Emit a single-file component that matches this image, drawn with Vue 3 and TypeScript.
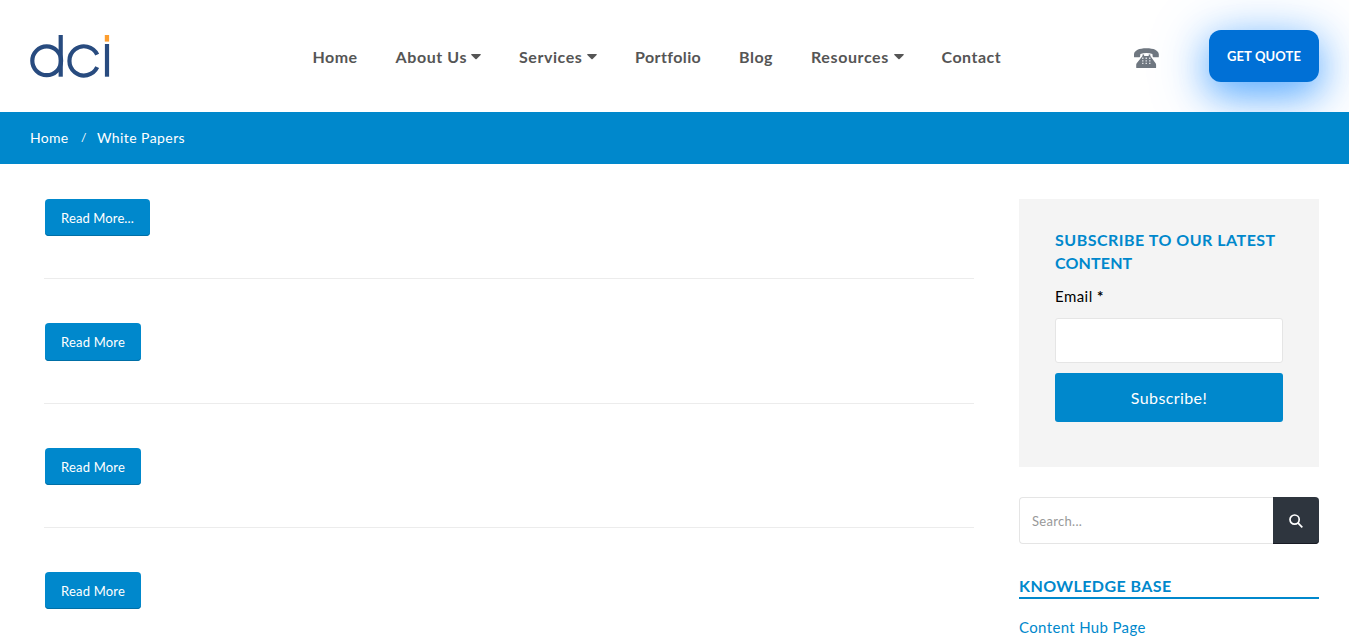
<script setup lang="ts">
interface NavItem { label: string; key: string; menu?: boolean }

const nav: NavItem[] = [
  { label: 'Home', key: 'home' },
  { label: 'About Us', key: 'about', menu: true },
  { label: 'Services', key: 'services', menu: true },
  { label: 'Portfolio', key: 'portfolio' },
  { label: 'Blog', key: 'blog' },
  { label: 'Resources', key: 'resources', menu: true },
  { label: 'Contact', key: 'contact' },
]
const posts: string[] = ['Read More...', 'Read More', 'Read More', 'Read More']
</script>

<template>
  <div class="page">
    <header class="header">
      <a class="logo" aria-label="dci">
        <svg width="80" height="44" viewBox="30 35 80 44">
          <g fill="none" stroke="#284b7f" stroke-width="4.2">
            <circle cx="46.700" cy="60.800" r="14.400" />
            <path d="M60.700 35V76.700" />
            <path d="M97.200 54.600A14.600 14.600 0 1 0 97.200 67.200" />
            <path d="M107 44V76.700" />
          </g>
          <rect x="104.800" y="35" width="4.300" height="6.600" fill="#fd9e2f" />
        </svg>
      </a>
      <nav class="nav">
        <a v-for="item in nav" :key="item.key" class="nav-item" :class="item.key">
          <span>{{ item.label }}</span>
          <svg v-if="item.menu" class="caret" width="10" height="6" viewBox="0 0 10 6">
            <path d="M.7 0h8.600q.9.200.3.900L5.600 5q-.6.600-1.200 0L.4.900Q-.2.200.7 0z" fill="#555" />
          </svg>
        </a>
      </nav>
      <svg class="phone" width="25" height="21" viewBox="0 0 25 21">
        <path fill="#6f7780" d="M0 8.700V6.200C.4 2.300 5 .2 12.400.2S24.400 2.300 24.800 6.200v2.500q0 .5-.6.500h-4.800q-.6 0-.7-.6l-.3-2.500Q15.700 4.900 12.400 4.900T6.400 6.100L6.100 8.600q-.1.600-.7.600H.6Q0 9.200 0 8.700z" />
        <path fill="#6f7780" d="M8.500 6.500h1.600v1.600h4.600V6.500h1.600v1.600l5.300 7.100q.5.800.5 1.800v2.600q0 .5-.6.500H2.800q-.6 0-.6-.5v-2.600q0-1 .5-1.800l5.800-7.100z" />
        <g fill="#d9dcdf">
          <path d="M8 9.600h1.500v1.300H8zM11.500 9.600H13v1.300h-1.500zM15 9.600h1.500v1.300H15zM8 12.200h1.500v1.300H8zM11.500 12.200H13v1.300h-1.500zM15 12.200h1.500v1.300H15zM8 14.800h1.500v1.300H8zM11.500 14.800H13v1.300h-1.500zM15 14.800h1.500v1.300H15z" />
        </g>
      </svg>
      <a class="quote">GET QUOTE</a>
    </header>
    <div class="crumbs">
      <a class="crumb-home">Home</a><span class="slash">/</span><span class="crumb-page">White Papers</span>
    </div>
    <main class="main">
      <section class="posts">
        <article v-for="(label, i) in posts" :key="i" class="post">
          <a class="more" :class="{ wide: i === 0 }">{{ label }}</a>
        </article>
      </section>
      <aside class="side">
        <form class="subscribe">
          <h2>SUBSCRIBE TO OUR LATEST<br><span>CONTENT</span></h2>
          <label for="email"><span>Email</span> <b>*</b></label>
          <input id="email" type="email">
          <button type="button">Subscribe!</button>
        </form>
        <div class="search">
          <input type="text" placeholder="Search...">
          <button type="button" aria-label="Search">
            <svg width="14" height="14" viewBox="0 0 14 14" fill="none" stroke="#fff" stroke-width="1.7">
              <circle cx="5.600" cy="5.600" r="4.600" />
              <path d="M8.900 8.900l4.400 4.400" />
            </svg>
          </button>
        </div>
        <h3><span>KNOWLEDGE BASE</span></h3>
        <a class="hub">Content Hub Page</a>
      </aside>
    </main>
  </div>
</template>

<style>
html, body { background: #fff; overflow: hidden; }
</style>

<style scoped>
* { box-sizing: border-box; }
.page {
  width: 1349px; height: 643px; overflow: hidden; background: #fff;
  font-family: Lato, "Open Sans", sans-serif; color: #555;
}
.header { height: 112px; display: flex; overflow: hidden; padding: 0 30px; }
.logo { display: block; width: 282.5px; padding-top: 35px; }
.logo svg { display: block; }
.nav { display: flex; height: 114px; align-items: center; width: 821.5px; }
.nav-item {
  display: flex; align-items: center; margin-right: 38px; white-space: nowrap;
  font-size: 16px; font-weight: 700; line-height: 20px; color: #555;
}
.caret { margin-top: -1px; flex: none; }
.home { width: 45px; letter-spacing: .45px; }
.about { width: 85.5px; letter-spacing: .6px; }
.services { width: 78px; letter-spacing: .55px; }
.portfolio { width: 66px; letter-spacing: .4px; }
.blog { width: 34px; letter-spacing: .5px; }
.resources { width: 92.5px; letter-spacing: .6px; }
.contact { width: 61px; letter-spacing: .5px; }
.nav-item span { flex: 1; min-width: 0; }
.phone { margin-top: 48px; flex: none; }
.quote {
  width: 110px; height: 52px; margin: 30px 0 0 50px; border-radius: 12px; background: #0070d6;
  box-shadow: 0 10px 60px rgba(0, 127, 255, .42), 0 12px 34px rgba(0, 127, 255, .46);
  color: #fff; font-size: 13px; font-weight: 700; line-height: 52px; letter-spacing: .1px; text-align: center; white-space: nowrap; flex: none;
}
.crumbs {
  height: 52px; background: #0088cc; color: #fff; padding: 0 0 2px 30px;
  display: flex; align-items: center; font-size: 14px; white-space: nowrap;
}
.crumb-home { width: 51px; letter-spacing: .3px; }
.slash { width: 16px; font-size: 12px; }
.crumb-page { letter-spacing: .42px; }
.main { display: flex; padding: 35px 30px 0 44px; justify-content: space-between; }
.posts { width: 930px; }
.post { height: 80.2px; border-bottom: 1px solid #ececec; margin-bottom: 44.2px; padding-left: 1px; }
.more {
  display: block; width: 96px; height: 37.2px; background: #0088cc; border-radius: 4px;
  box-shadow: inset 0 -1px #006fa6; color: #fff; font-size: 13px; line-height: 38px; letter-spacing: .2px; text-align: center;
}
.wide { width: 105px; letter-spacing: .12px; }
.side { width: 300px; }
.subscribe { height: 268px; background: #f4f4f4; padding: 29px 36px; }
h2 { margin: 0; font-size: 16px; line-height: 23px; font-weight: 700; color: #0088cc; white-space: nowrap; letter-spacing: .5px; }
h2 span { letter-spacing: .15px; }
.subscribe label { display: block; color: #000; font-size: 15px; line-height: 24px; margin-top: 10px; letter-spacing: .45px; }
.subscribe input { display: block; width: 228px; height: 45px; border: 1px solid #e5e5e5; border-radius: 3px; background: #fff; margin-top: 10px; padding: 0 12px; }
.subscribe button { display: block; width: 228px; height: 49px; margin-top: 10px; border: 0; border-radius: 3px; background: #0088cc; color: #fff; font: 16px/49px Lato, sans-serif; padding: 0; letter-spacing: .4px; }
.search { display: flex; height: 47px; margin-top: 30px; }
.search input { width: 254px; border: 1px solid #e5e5e5; border-right: 0; border-radius: 4px 0 0 4px; padding: 0 12px; background: #fff; font: 13px Lato, sans-serif; letter-spacing: .3px; }
.search input::placeholder { color: #999; opacity: 1; }
.search button { width: 46px; border: 0; padding: 0; border-radius: 0 4px 4px 0; background: #2e353e; box-shadow: inset 0 -1px #181b24; display: flex; align-items: center; justify-content: center; }
h3 { margin: 31px 0 0; height: 24px; border-bottom: 2px solid #0088cc; color: #0088cc; font-size: 16px; font-weight: 700; line-height: 22px; white-space: nowrap; letter-spacing: .42px; }
.hub { display: block; margin-top: 16px; font-size: 15px; line-height: 24px; color: #0088cc; letter-spacing: .35px; }
</style>
